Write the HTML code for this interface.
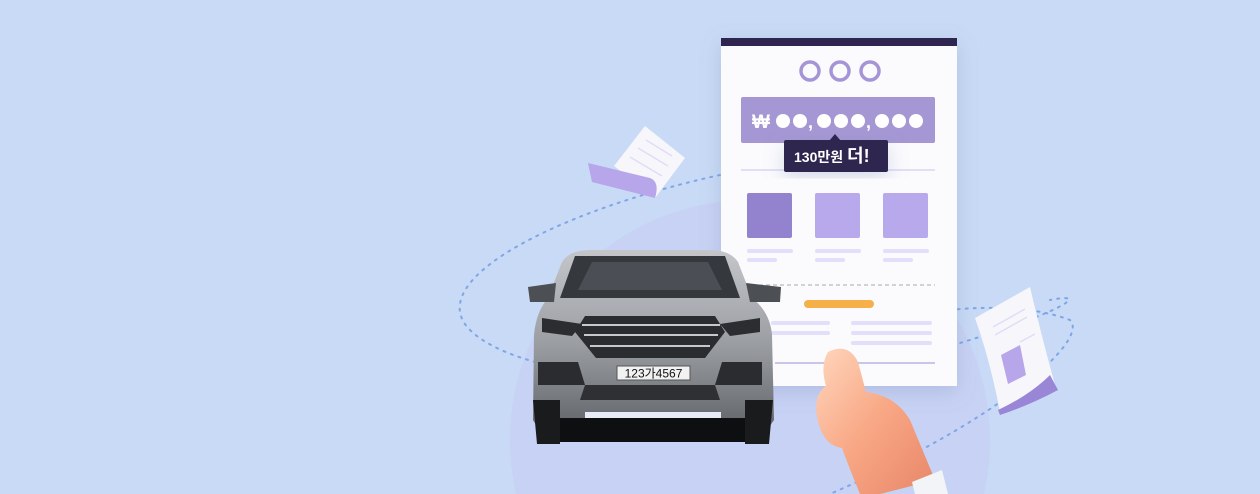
<!DOCTYPE html>
<html><head><meta charset="utf-8"><style>
html,body{margin:0;padding:0;width:1260px;height:494px;overflow:hidden}
body{background:#c8daf5;position:relative;font-family:"Liberation Sans","Noto Sans CJK KR",sans-serif}
svg{position:absolute;left:0;top:0;display:block}
</style></head><body>
<svg width="1260" height="494" viewBox="0 0 1260 494">
<defs>
<linearGradient id="body" x1="0" y1="0" x2="0" y2="1">
<stop offset="0" stop-color="#c4c6ca"/><stop offset="0.5" stop-color="#9a9da2"/><stop offset="1" stop-color="#5a5d61"/>
</linearGradient>
<linearGradient id="skin" x1="0" y1="0" x2="1" y2="1">
<stop offset="0" stop-color="#ffd6bd"/><stop offset="0.5" stop-color="#f8a784"/><stop offset="1" stop-color="#e8866a"/>
</linearGradient>
<filter id="sh" x="-20%" y="-20%" width="140%" height="140%"><feDropShadow dx="0" dy="6" stdDeviation="10" flood-color="#7a8ab8" flood-opacity="0.3"/></filter>
</defs>
<circle cx="750" cy="440" r="240" fill="#c7cff4" opacity="0.8"/>
<path d="M720 175 C560 210 420 280 470 330 C520 380 720 400 900 360 C1050 320 1100 290 1050 300" fill="none" stroke="#7fa6e6" stroke-width="2" stroke-dasharray="2 6" stroke-linecap="round"/>
<path d="M740 360 C860 320 990 290 1070 320 C1090 340 1000 420 830 494" fill="none" stroke="#7fa6e6" stroke-width="2" stroke-dasharray="2 6" stroke-linecap="round"/>
<path d="M645 126 L685 158 L655 198 L614 166 Z" fill="#f7f7fb"/>
<path d="M630 157 L662 176 M638 148 L668 166 M646 140 L672 156" stroke="#e0dcf7" stroke-width="1.5"/>
<path d="M588 163 L650 178 Q660 182 655 198 L592 182 Z" fill="#b7a6ea"/>
<path d="M975 318 L1030 287 Q1040 330 1055 385 L1000 412 Q990 360 975 318 Z" fill="#f7f7fb"/>
<path d="M993 327 L1025 309 M995 335 L1027 317 M1020 342 L1035 334" stroke="#e0dcf7" stroke-width="1.5"/>
<path d="M1001 355 L1020 345 L1026 375 L1008 384 Z" fill="#b8a6ea"/>
<path d="M998 410 Q1030 395 1050 375 L1058 390 Q1030 405 1000 415 Z" fill="#9a86d6"/>
<g filter="url(#sh)"><rect x="721" y="38" width="236" height="348" fill="#fbfbfe"/></g>
<rect x="721" y="38" width="236" height="8" fill="#2e2650"/>
<g fill="none" stroke="#a595d6" stroke-width="3.5"><circle cx="810" cy="71" r="9"/><circle cx="840" cy="71" r="9"/><circle cx="870" cy="71" r="9"/></g>
<rect x="741" y="97" width="194" height="46" rx="2" fill="#a597d3"/>
<text x="752" y="128" font-size="19" font-weight="bold" fill="#fff">₩</text>
<g fill="#fff"><circle cx="783" cy="121" r="7"/><circle cx="800" cy="121" r="7"/><circle cx="824" cy="121" r="7"/><circle cx="841" cy="121" r="7"/><circle cx="858" cy="121" r="7"/><circle cx="882" cy="121" r="7"/><circle cx="899" cy="121" r="7"/><circle cx="916" cy="121" r="7"/></g>
<text x="808" y="128" font-size="18" font-weight="bold" fill="#fff">,</text>
<text x="866" y="128" font-size="18" font-weight="bold" fill="#fff">,</text>
<line x1="741" y1="170" x2="935" y2="170" stroke="#dad6f0" stroke-width="1.5"/>
<g filter="url(#sh)"><rect x="784" y="140" width="104" height="32" rx="2" fill="#2d2650"/></g>
<path d="M829 141 L835 134 L841 141 Z" fill="#2d2650"/>
<text x="794" y="162" font-size="14" font-weight="bold" fill="#fff">130만원 <tspan font-size="18">더!</tspan></text>
<rect x="747" y="193" width="45" height="45" rx="2" fill="#9382ce"/>
<rect x="815" y="193" width="45" height="45" rx="2" fill="#b7a9ec"/>
<rect x="883" y="193" width="45" height="45" rx="2" fill="#b7a9ec"/>
<g stroke="#e3defa" stroke-width="4" stroke-linecap="round">
<line x1="749" y1="251" x2="791" y2="251"/><line x1="749" y1="260" x2="775" y2="260"/>
<line x1="817" y1="251" x2="859" y2="251"/><line x1="817" y1="260" x2="843" y2="260"/>
<line x1="885" y1="251" x2="927" y2="251"/><line x1="885" y1="260" x2="911" y2="260"/>
<line x1="773" y1="323" x2="828" y2="323"/><line x1="773" y1="333" x2="828" y2="333"/>
<line x1="853" y1="323" x2="930" y2="323"/><line x1="853" y1="333" x2="930" y2="333"/><line x1="853" y1="343" x2="930" y2="343"/>
</g>
<line x1="745" y1="285" x2="935" y2="285" stroke="#aaa" stroke-width="1" stroke-dasharray="4 3"/>
<rect x="804" y="300" width="70" height="8" rx="4" fill="#f5b04a"/>
<line x1="775" y1="363" x2="935" y2="363" stroke="#bdb3e4" stroke-width="1.5"/>
<g>
<path d="M562 262 Q570 250 590 250 L710 250 Q730 250 738 262 L752 298 Q770 312 772 335 L774 420 L760 440 L545 440 L533 420 L534 335 Q536 312 548 298 Z" fill="url(#body)"/>
<path d="M575 256 L725 256 L740 298 L560 298 Z" fill="#35383d"/>
<path d="M592 262 L708 262 L722 290 L578 290 Z" fill="#4b4f55"/>
<path d="M528 287 L556 283 L554 302 L530 302 Z" fill="#4c4f53"/>
<path d="M746 283 L781 287 L780 302 L750 302 Z" fill="#4c4f53"/>
<path d="M585 316 L715 316 L725 332 L705 358 L596 358 L575 332 Z" fill="#2a2c30"/>
<g stroke="#c5c8cc" stroke-width="2"><line x1="582" y1="325" x2="720" y2="325"/><line x1="584" y1="335" x2="718" y2="335"/><line x1="590" y1="346" x2="710" y2="346"/></g>
<path d="M542 318 L582 324 L572 336 L542 332 Z" fill="#2b2d31"/>
<path d="M760 318 L720 324 L730 336 L760 332 Z" fill="#2b2d31"/>
<path d="M538 362 L578 362 L585 385 L538 385 Z" fill="#2a2c30"/>
<path d="M762 362 L722 362 L715 385 L762 385 Z" fill="#2a2c30"/>
<rect x="617" y="366" width="73" height="14" fill="#f2f2f2" stroke="#555" stroke-width="1"/>
<text x="653.5" y="377.5" font-size="12" text-anchor="middle" fill="#111">123가4567</text>
<path d="M585 385 L715 385 L720 400 L580 400 Z" fill="#2e3034"/>
<rect x="585" y="412" width="136" height="6" fill="#e8ecf7"/>
<path d="M533 400 L560 400 L560 444 L537 444 Z M745 400 L773 400 L769 444 L745 444 Z" fill="#1a1b1d"/>
<rect x="560" y="418" width="185" height="24" fill="#0e0f10"/>
</g>
<path d="M828 352 Q848 342 858 362 L866 392 Q895 395 910 420 L935 480 L880 494 L860 494 Q850 470 842 448 Q820 445 816 410 Q816 392 826 386 Q820 365 828 352 Z" fill="url(#skin)"/>
<path d="M912 482 L942 470 L948 494 L915 494 Z" fill="#f3f4f8"/>
</svg>
</body></html>
